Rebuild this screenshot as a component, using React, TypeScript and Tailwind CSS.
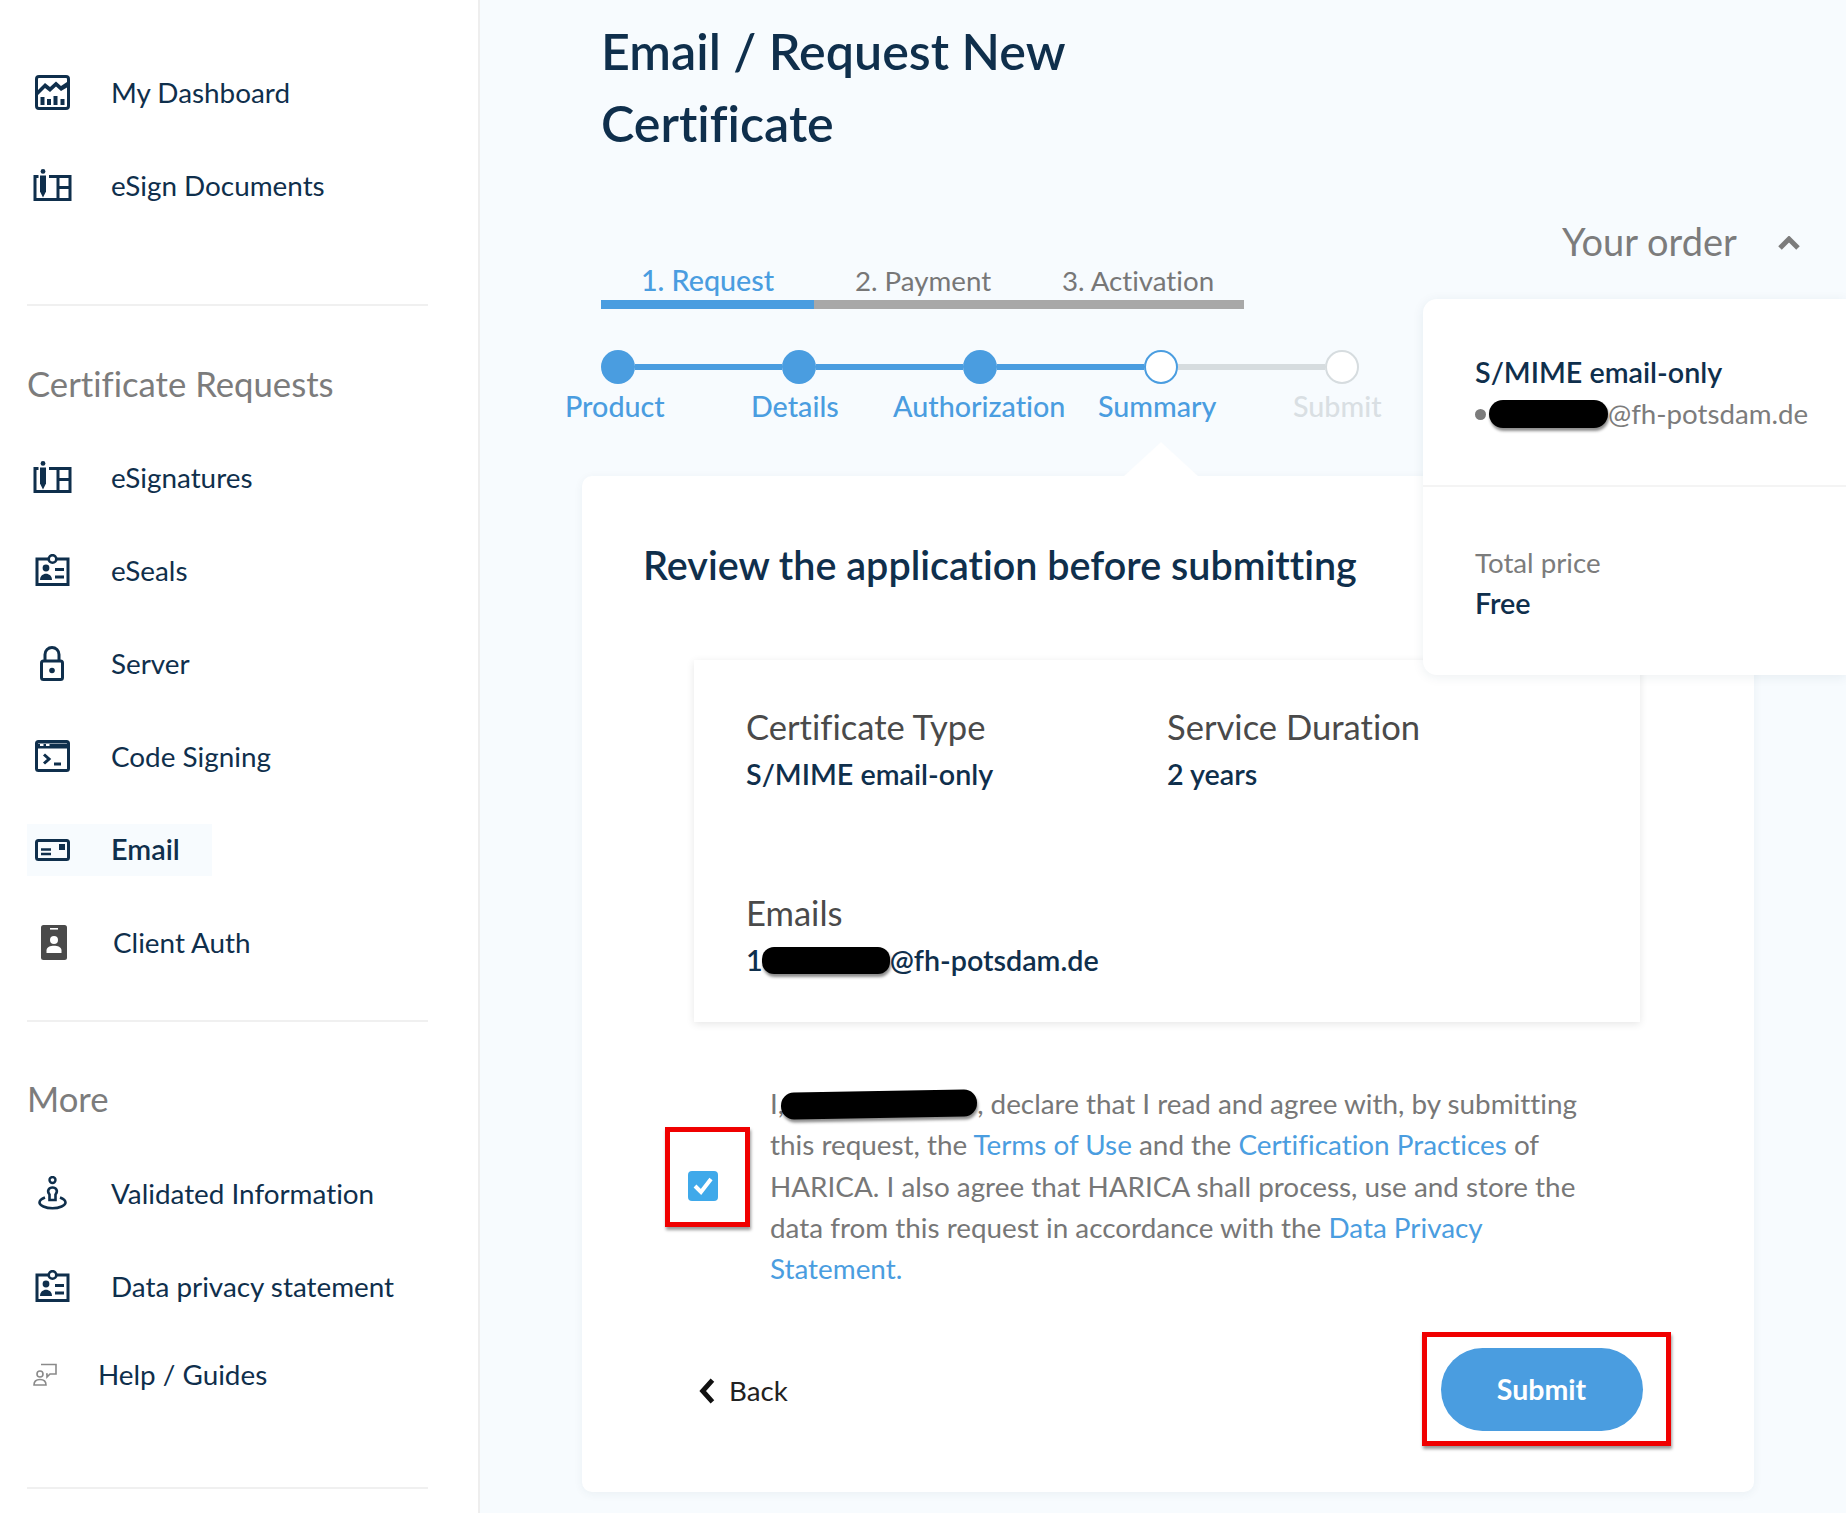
import React from "react";

const ink = "#0f2f4c";

function I({ w, h, vb, children, cls }: { w: number; h: number; vb: string; children: React.ReactNode; cls?: string }) {
  return (
    <svg width={w} height={h} viewBox={vb} fill="none" stroke={ink} strokeWidth={2} className={cls}>
      {children}
    </svg>
  );
}

const DashIcon = () => (
  <I w={35} h={35} vb="0 0 35 35">
    <rect x="1.5" y="1.5" width="32" height="32" rx="2.5" strokeWidth="3" />
    <path d="M3 15 L10 8 L15 12 L21 6.5 L26 11 L32 7 L32 12.5 L26 16 L21 11.5 L15 17 L10 13 L3 20 Z" fill={ink} stroke="none" />
    <path d="M7.5 22v8M14 24v6M20.5 21v9M27.5 24v6" strokeWidth="4" />
  </I>
);
const SignIcon = () => (
  <I w={39} h={32} vb="0 0 39 32">
    <path d="M5.5 7.5H2v23h35V7.5H16" strokeWidth="3" />
    <circle cx="10" cy="2.4" r="2.4" fill={ink} stroke="none" />
    <path d="M7 6.5h6v16l-3 6-3-6z" fill={ink} stroke="none" />
    <path d="M25 7.5v23" strokeWidth="3" />
    <path d="M25 18.5h12" strokeWidth="3" />
  </I>
);
const BadgeIcon = () => (
  <I w={35} h={32} vb="0 0 35 32">
    <path d="M13 5H2v25.5h31V5H22" strokeWidth="3" />
    <circle cx="17.5" cy="5" r="3.8" strokeWidth="2.6" />
    <circle cx="11" cy="14" r="3.4" fill={ink} stroke="none" />
    <path d="M5 26c0-8.5 12-8.5 12 0z" fill={ink} stroke="none" />
    <path d="M20 15.5h9M20 23h9" strokeWidth="3" />
  </I>
);
const LockIcon = () => (
  <I w={24} h={35} vb="0 0 24 35">
    <rect x="1.5" y="15" width="21" height="18.5" rx="2" strokeWidth="3" />
    <path d="M5 15V8.5a7 7 0 0 1 14 0V15" strokeWidth="3" />
    <circle cx="12" cy="24.5" r="2.8" fill={ink} stroke="none" />
  </I>
);
const TermIcon = () => (
  <I w={35} h={32} vb="0 0 35 32">
    <rect x="1.5" y="1.5" width="32" height="29" rx="2" strokeWidth="3" />
    <path d="M1.5 6h32" strokeWidth="5" />
    <path d="M5 5h3.5M11 5h3.5" strokeWidth="2" stroke="#fff" />
    <path d="M9 14.5l5 4.5-5 4.5" strokeWidth="3" />
    <path d="M19 24h7" strokeWidth="3" />
  </I>
);
const MailIcon = () => (
  <I w={35} h={22} vb="0 0 35 22">
    <rect x="1.5" y="1.5" width="32" height="19" rx="2" strokeWidth="3" />
    <path d="M6 10.5h10M6 15h10" strokeWidth="2.4" />
    <rect x="24" y="5" width="6" height="6" fill={ink} stroke="none" />
  </I>
);
const ClientIcon = () => (
  <svg width={26} height={35} viewBox="0 0 26 35" className="ml-[4px]">
    <rect width="26" height="35" rx="2.5" fill="#4a4a4a" />
    <rect x="9" y="3" width="8" height="1.6" fill="#fff" />
    <circle cx="13" cy="15" r="4" fill="#fff" />
    <path d="M5.5 28v-2.5c0-3.5 4-4.8 7.5-4.8s7.5 1.3 7.5 4.8V28z" fill="#fff" />
  </svg>
);
const PinIcon = () => (
  <I w={29} h={34} vb="0 0 29 34">
    <circle cx="14.5" cy="4" r="3" strokeWidth="2.4" />
    <path d="M11.5 24v-5.5c-3-3.5-0.5-7 3-7s6 3.5 3 7V24z" strokeWidth="2.6" />
    <path d="M7 21.5C3 23 1.5 25 1.5 26.5c0 3 6 5.8 13 5.8s13-2.8 13-5.8c0-1.5-1.5-3.5-5.5-5" strokeWidth="2.6" />
  </I>
);
const HelpIcon = () => (
  <svg width={24} height={23} viewBox="0 0 24 23" fill="none" stroke="#8a8a8a" strokeWidth="1.6">
    <circle cx="7" cy="11" r="3" />
    <path d="M1 22c0-4 2.5-5.5 6-5.5s6 1.5 6 5.5z" />
    <path d="M8 1.5h15v9.5h-6l-3 3v-3h-1" />
  </svg>
);

function Row({ icon, label, h, pad = 34, bold }: { icon: React.ReactNode; label: string; h: string; pad?: number; bold?: boolean }) {
  return (
    <div className={`flex items-center pl-[27px] ${h}`}>
      <span className={`flex items-center ${bold ? "bg-[#f7fbfe] h-[52px] w-[185px]" : ""}`}>
        <span className="flex w-[50px] justify-center shrink-0">{icon}</span>
        <span className={`whitespace-nowrap ${bold ? "text-[28.8px] font-semibold" : "text-[27.85px]"}`} style={{ marginLeft: pad }}>{label}</span>
      </span>
    </div>
  );
}

function Step({ label, state }: { label: string; state: "done" | "cur" | "todo" }) {
  const c = state === "done" ? "bg-[#4a9de0]" : state === "cur" ? "bg-white border-2 border-[#4a9de0]" : "bg-white border-2 border-[#d6dcdf]";
  return <span className={`w-[34px] h-[34px] rounded-full shrink-0 ${c}`} aria-label={label} />;
}

export default function App() {
  return (
    <div className="flex w-[1846px] h-[1513px] overflow-hidden bg-[#f7fbfe] text-[#0f2f4c] [font-variant-ligatures:none] font-['Lato','Liberation_Sans',sans-serif]">
      {/* Sidebar */}
      <aside className="w-[480px] shrink-0 h-full bg-white border-r-2 border-[#eeeeee] pt-[46px]">
        <Row h="h-[93px]" icon={<DashIcon />} label="My Dashboard" />
        <Row h="h-[93px]" icon={<SignIcon />} label="eSign Documents" />
        <div className="mx-[27px] mt-[72px] h-[2px] bg-[#f0f0f0] w-[401px]" />
        <div className="pl-[27px] mt-[55px] h-[46px] leading-[46px] text-[34.7px] text-[#7c7c7c]">Certificate Requests</div>
        <div className="mt-[24px]" />
        <Row h="h-[93px]" icon={<SignIcon />} label="eSignatures" />
        <Row h="h-[93px]" icon={<BadgeIcon />} label="eSeals" />
        <Row h="h-[93px]" icon={<LockIcon />} label="Server" />
        <Row h="h-[93px]" icon={<TermIcon />} label="Code Signing" />
        <Row h="h-[93px]" icon={<MailIcon />} label="Email" bold />
        <Row h="h-[93px]" icon={<ClientIcon />} label="Client Auth" pad={36} />
        <div className="mx-[27px] mt-[31px] h-[2px] bg-[#f0f0f0] w-[401px]" />
        <div className="pl-[27px] mt-[54px] h-[46px] leading-[46px] text-[34.7px] text-[#7c7c7c]">More</div>
        <div className="mt-[25px]" />
        <Row h="h-[93px]" icon={<PinIcon />} label="Validated Information" />
        <Row h="h-[93px]" icon={<BadgeIcon />} label="Data privacy statement" pad={34} />
        <div className="flex items-center pl-[33px] h-[83px]">
          <HelpIcon />
          <span className="ml-[41px] text-[27.85px] whitespace-nowrap">Help / Guides</span>
        </div>
        <div className="mx-[27px] mt-[71px] h-[2px] bg-[#f0f0f0] w-[401px]" />
      </aside>

      {/* Main */}
      <main className="relative flex-1 h-full">
        <div className="pl-[121px] pt-[15px]">
          <h1 className="text-[50.2px] leading-[72px] font-semibold w-[520px]">Email / Request New Certificate</h1>
          {/* Tabs */}
          <div className="mt-[102px] w-[643px]">
            <div className="flex h-[39px] text-[27.7px] items-center text-[#777777]">
              <span className="w-[213px] text-center text-[#4a9de0] text-[28.7px] font-medium">1. Request</span>
              <span className="w-[218px] text-center">2. Payment</span>
              <span className="w-[212px] text-center">3. Activation</span>
            </div>
            <div className="flex h-[9px] bg-[#a8a8a8]"><div className="w-[213px] bg-[#4a9de0]" /></div>
          </div>
          {/* Stepper */}
          <div className="mt-[41px] flex items-center w-[760px]">
            <Step label="Product" state="done" />
            <span className="w-[147px] h-[6px] bg-[#4a9de0]" />
            <Step label="Details" state="done" />
            <span className="w-[147px] h-[6px] bg-[#4a9de0]" />
            <Step label="Authorization" state="done" />
            <span className="w-[147px] h-[6px] bg-[#4a9de0]" />
            <Step label="Summary" state="cur" />
            <span className="w-[147px] h-[6px] bg-[#d6dcdf]" />
            <Step label="Submit" state="todo" />
          </div>
          <div className="-ml-[36px] mt-[6px] grid grid-cols-[186px_142px_205px_195px_auto] text-[28.7px] leading-[32px] text-[#4a9de0] font-medium">
            <span>Product</span>
            <span>Details</span>
            <span>Authorization</span>
            <span>Summary</span>
            <span className="text-[#d9dfe3]">Submit</span>
          </div>
        </div>

        {/* Review card */}
        <div className="relative ml-[102px] mt-[54px] w-[1172px] h-[1016px] bg-white rounded-[10px] shadow-[0_2px_10px_rgba(30,60,90,0.06)] pt-[57px]">
          <div className="absolute -top-[34px] left-[542px] w-0 h-0 border-l-[37px] border-r-[37px] border-b-[34px] border-l-transparent border-r-transparent border-b-white" />
          <h2 className="pl-[61px] text-[39.5px] leading-[64px] font-semibold whitespace-nowrap">Review the application before submitting</h2>
          <div className="ml-[112px] mt-[63px] w-[946px] h-[362px] bg-white shadow-[0_2px_8px_rgba(0,0,0,0.1)] pl-[52px] pt-[44px]">
            <div className="flex">
              <div className="w-[421px]">
                <div className="text-[34.6px] leading-[46px] text-[#4a4a4a]">Certificate Type</div>
                <div className="mt-[1px] text-[28.7px] leading-[46px] font-semibold">S/MIME email-only</div>
              </div>
              <div>
                <div className="text-[34.6px] leading-[46px] text-[#4a4a4a]">Service Duration</div>
                <div className="mt-[1px] text-[28.7px] leading-[46px] font-semibold">2 years</div>
              </div>
            </div>
            <div className="mt-[93px] text-[34.6px] leading-[46px] text-[#4a4a4a]">Emails</div>
            <div className="mt-[1px] text-[28.7px] leading-[46px] font-semibold flex items-center">
              <span>1</span>
              <span className="w-[128px] h-[27px] -ml-[1px] bg-black rounded-[12px] shadow-[1px_3px_3px_rgba(0,0,0,0.45)]" />
              <span>@fh-potsdam.de</span>
            </div>
          </div>

          <div className="flex mt-[63px] ml-[83px]">
            <div className="mt-[42px] w-[85px] h-[100px] border-[5px] border-[#f00000] shadow-[1px_3px_3px_rgba(0,0,0,0.4)] flex items-center justify-center shrink-0 pr-[10px] pt-[17px]">
              <span className="w-[30px] h-[30px] rounded-[4px] bg-[#3fa9ea] flex items-center justify-center">
                <svg width="22" height="20" viewBox="0 0 22 20" fill="none" stroke="#fff" strokeWidth="4"><path d="M3 10l6 6L19 3" /></svg>
              </span>
            </div>
            <p className="ml-[20px] w-[810px] text-[27.85px] leading-[41.3px] text-[#777777] -mt-[2px]">
              I,<span className="inline-block align-middle -ml-[3px] w-[196px] h-[27px] -translate-y-[2px] bg-black rounded-[13px] shadow-[1px_3px_3px_rgba(0,0,0,0.45)] -rotate-1" />, declare that I read and agree with, by submitting this request, the <span className="text-[#4a9de0]">Terms of Use</span> and the <span className="text-[#4a9de0]">Certification Practices</span> of HARICA. I also agree that HARICA shall process, use and store the data from this request in accordance with the <span className="text-[#4a9de0]">Data Privacy</span> <span className="text-[#4a9de0]">Statement.</span>
            </p>
          </div>

          <div className="flex items-center justify-between pl-[116px] pr-[83px] mt-[43px]">
            <span className="flex items-center mt-[3px] text-[27.7px] text-[#222222]">
              <svg width="18" height="26" viewBox="0 0 16 24" fill="none" stroke="#111" strokeWidth="4.5"><path d="M13 2L4 12l9 10" /></svg>
              <span className="ml-[13px]">Back</span>
            </span>
            <div className="w-[249px] h-[114px] border-[5px] border-[#f00000] shadow-[1px_3px_3px_rgba(0,0,0,0.4)] flex items-center justify-center pr-[10px]">
              <span className="w-[202px] h-[83px] shrink-0 rounded-full bg-[#4a9de0] text-white text-[28.5px] font-bold flex items-center justify-center">Submit</span>
            </div>
          </div>
        </div>

        {/* Your order */}
        <div className="absolute right-0 top-[218px] w-[423px]">
          <div className="flex items-center h-[46px] pl-[139px] text-[38px] text-[#7c7c7c]">
            <span>Your order</span>
            <svg className="ml-[41px] mt-[3px]" width="22" height="14" viewBox="0 0 22 14" fill="none" stroke="#7c7c7c" strokeWidth="5"><path d="M2 12l9-9 9 9" /></svg>
          </div>
        </div>
        <div className="absolute right-0 top-[299px] w-[423px] h-[376px] bg-white rounded-l-[14px] shadow-[0_2px_12px_rgba(30,60,90,0.08)]">
          <div className="h-[188px] border-b-2 border-[#f4f4f4] pl-[52px] pt-[52px]">
            <div className="text-[28.7px] leading-[42px] font-semibold">S/MIME email-only</div>
            <div className="text-[27.7px] leading-[42px] text-[#7c7c7c] flex items-center">
              <span className="w-[11px] h-[11px] rounded-full bg-[#7c7c7c]" />
              <span className="ml-[3px] w-[119px] h-[28px] bg-black rounded-[14px] shadow-[1px_3px_3px_rgba(0,0,0,0.45)]" />
              <span>@fh-potsdam.de</span>
            </div>
          </div>
          <div className="pl-[52px] pt-[55px]">
            <div className="text-[27.7px] leading-[42px] text-[#7c7c7c]">Total price</div>
            <div className="text-[28.7px] leading-[39px] font-semibold">Free</div>
          </div>
        </div>
      </main>
    </div>
  );
}
